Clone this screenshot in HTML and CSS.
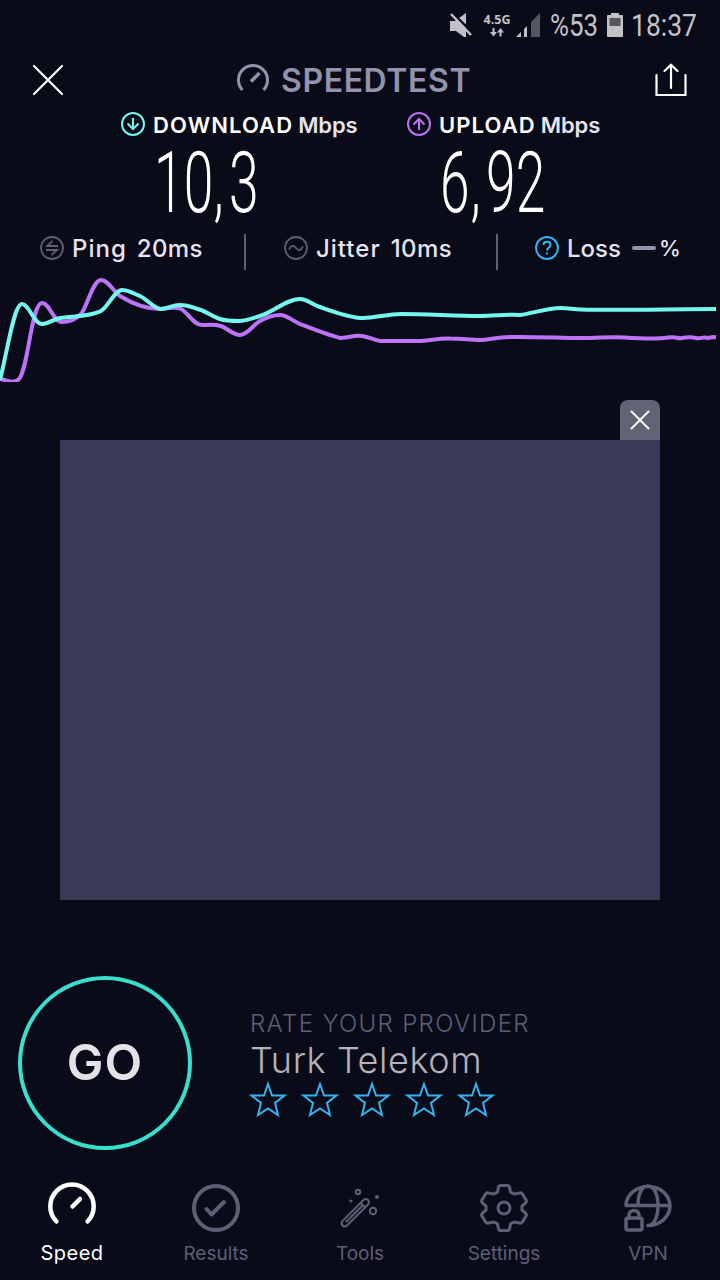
FILE: index.html
```html
<!DOCTYPE html>
<html lang="tr">
<head>
  <meta charset="UTF-8" />
  <meta name="viewport" content="width=device-width, initial-scale=1.0" />
  <title>Speedtest</title>
  <link rel="stylesheet" href="styles.css">
</head>
<body>
  <div class="status-bar">
    <svg class="mute" width="23" height="26" viewBox="0 0 23 26">
      <path d="M0 7H5L16 -1V23H14L6 17H0Z" fill="#c2c2c5" />
      <path d="M0 -3L24 20" stroke="#090b19" stroke-width="2.500" />
      <path d="M1 0L21 21" stroke="#c2c2c5" stroke-width="2.500" />
    </svg>
    <div class="network">
      <span>4.5G</span>
      <svg width="14" height="9" viewBox="0 0 14 9">
        <path d="M2.500 0H4.500V4H7L3.500 8.500L0 4H2.500ZM9.500 8.500H11.500V4.500H14L10.500 0L7 4.500H9.500Z" fill="#c2c2c5" />
      </svg>
    </div>
    <svg class="signal" width="25" height="25" viewBox="0 0 25 25">
      <path d="M0 24L5 19V24ZM8 24V16L11 13V24Z" fill="#c2c2c5" />
      <path d="M15 24V9L24 0V24Z" fill="#565661" />
    </svg>
    <svg class="percent" width="49" height="40" viewBox="0 0 49 40">
      <text x="0" y="31" textLength="48" lengthAdjust="spacingAndGlyphs">%53</text>
    </svg>
    <svg class="battery" width="16" height="24" viewBox="0 0 16 24">
      <path d="M4 0H12V2H15Q16 2 16 3V23Q16 24 15 24H1Q0 24 0 23V3Q0 2 1 2H4Z" fill="#c2c2c5" />
      <path d="M2.500 5H13.500V13H2.500Z" fill="#565661" />
    </svg>
    <svg class="clock" width="68" height="40" viewBox="0 0 68 40">
      <text x="0" y="31" textLength="66" lengthAdjust="spacingAndGlyphs">18:37</text>
    </svg>
  </div>

  <div class="top-bar">
    <svg width="32" height="32" viewBox="0 0 32 32" fill="none" stroke="#fff" stroke-width="2.200" stroke-linecap="round">
      <path d="M2 2L30 30M30 2L2 30" />
    </svg>
    <div class="brand">
      <svg width="34" height="32" viewBox="0 0 34 32" fill="none" stroke="#9393ab" stroke-width="3">
        <path d="M6.500 26A14.500 14.500 0 1 1 27.500 26" />
        <path d="M15 17.500L23.500 9" stroke-width="3.500" />
      </svg>
      <span>SPEEDTEST</span>
    </div>
    <svg width="32" height="34" viewBox="0 0 32 34" fill="none" stroke="#fff" stroke-width="2.200">
      <path d="M1.500 12V32H30.500V12M16 25V2M9.500 8L16 1.800L22.500 8" stroke-linecap="round" />
    </svg>
  </div>

  <div class="results">
    <div class="result download">
      <div class="result-label">
        <svg width="24" height="24" viewBox="0 0 24 24" fill="none" stroke="#74f7ee" stroke-width="2">
          <circle cx="12" cy="12" r="11" />
          <path d="M12 6V17M6.500 11.500L12 17L17.500 11.500" />
        </svg>
        <b>DOWNLOAD</b><span>Mbps</span>
      </div>
      <svg class="value" width="112" height="84" viewBox="0 0 112 84">
        <text transform="scale(.62 1)" x="5 53 101 126" y="72">10,3</text>
      </svg>
    </div>
    <div class="result upload">
      <div class="result-label">
        <svg width="24" height="24" viewBox="0 0 24 24" fill="none" stroke="#bf71f5" stroke-width="2">
          <circle cx="12" cy="12" r="11" />
          <path d="M12 18V7M6.500 12.500L12 7L17.500 12.500" />
        </svg>
        <b>UPLOAD</b><span>Mbps</span>
      </div>
      <svg class="value" width="112" height="84" viewBox="0 0 112 84">
        <text transform="scale(.62 1)" x="5 54 79 127" y="72">6,92</text>
      </svg>
    </div>
  </div>

  <div class="metrics">
    <div class="metric ping">
      <svg width="24" height="24" viewBox="0 0 24 24" fill="none" stroke="#5e5f75" stroke-width="1.800">
        <circle cx="12" cy="12" r="11" />
        <path d="M18 10H7L12.500 5M6 14H17L11.500 19" />
      </svg>
      <span class="name">Ping</span><span>20ms</span>
    </div>
    <div class="metric jitter">
      <svg width="24" height="24" viewBox="0 0 24 24" fill="none" stroke="#5e5f75" stroke-width="1.800">
        <circle cx="12" cy="12" r="11" />
        <path d="M5 13.500C7 9 9.500 9 12 12S17 15 19 10.500" />
      </svg>
      <span class="name">Jitter</span><span>10ms</span>
    </div>
    <div class="metric loss">
      <svg width="24" height="24" viewBox="0 0 24 24" fill="none" stroke="#36b3ee" stroke-width="2">
        <circle cx="12" cy="12" r="11" />
        <path d="M8.500 9C8.500 4.500 15.500 4.500 15.500 9C15.500 11.500 12 11.500 12 14.500M12 16.500V18.500" />
      </svg>
      <span class="name">Loss</span><i class="dash"></i><span>%</span>
    </div>
  </div>

  <svg class="chart" width="720" height="107" viewBox="0 275 720 107" fill="none" stroke-width="4">
    <path stroke="#bd73f7" d="M0 379C8 380 12 384 18 380C28 374 31 303 42 303C50 303 53 322 62 322C69 322 75 320 81 314C87 307 93 280 101 280C108 280 113 291 120 296C133 304 147 309 160 309C167 309 174 306 181 309C188 312 193 325 202 325C208 325 214 324 221 326C227 328 233 335 240 335C247 335 253 325 260 321C267 317 273 315 280 315C287 315 293 321 300 324C313 329 328 335 340 338C347 338 354 335 362 336C369 337 374 340 380 341H418C430 341 437 338 450 338.500C462 338.500 470 340 480 340C490 340 495 337 510 337C535 336.500 560 338 585 338C600 338 610 336.500 625 337.500C640 338.500 658 339 668 337.500S676 339 682 338S691 337 696 338S703 336.500 708 338L713 337L716 337.500" />
    <path stroke="#74f7ee" d="M0 380C8 348 14 304 22 304C29 304 34 324 42 324C48 324 54 319 60 318C73 316 89 317 101 311C108 307 115 290 122 290C129 290 134 294 140 296C147 299 154 309 161 309C168 309 174 304 181 305C188 305 194 308 201 310C207 312 213 317 220 319C226 321 232 321 239 321C246 321 253 318 260 316C273 312 287 299 300 299C307 299 313 305 320 307C334 312 350 318 363 318C375 318 388 314 401 314C427 314 455 316 480 316C494 316 508 314 520 315C534 313 547 308 561 308C568 308 574 309.500 581 309.500C625 310.500 670 309 716 309" />
  </svg>

  <div class="ad">
    <div class="ad-close">
      <svg width="20" height="20" viewBox="0 0 20 20" stroke="#fff" stroke-width="1.800">
        <path d="M1 1L19 19M19 1L1 19" />
      </svg>
    </div>
    <div class="ad-body"></div>
  </div>

  <div class="provider">
    <div class="go">GO</div>
    <div class="rate">
      <div class="rate-title">RATE YOUR PROVIDER</div>
      <div class="rate-name">Turk Telekom</div>
      <svg class="stars" width="244" height="36" viewBox="0 0 244 36" fill="none" stroke="#36b3ee" stroke-width="2">
        <defs>
          <path id="star" d="M18 2L22 13.500H34.500L25 21L28 33L18 26.500L8 33L11 21L1.500 13.500H14Z" />
        </defs>
        <use href="#star" />
        <use href="#star" x="52" />
        <use href="#star" x="104" />
        <use href="#star" x="156" />
        <use href="#star" x="208" />
      </svg>
    </div>
  </div>

  <div class="nav">
    <div class="nav-item active">
      <svg width="50" height="50" viewBox="0 0 50 50" fill="none" stroke="#fff" stroke-width="4.500" stroke-linecap="round">
        <path d="M9.500 39.500A21.700 21.700 0 1 1 40.500 39.500" />
        <path d="M25.500 24.500L33 17" />
      </svg>
      <span>Speed</span>
    </div>
    <div class="nav-item">
      <svg width="50" height="50" viewBox="0 0 50 50" fill="none" stroke="#5e5f75" stroke-width="4" stroke-linecap="round" stroke-linejoin="round">
        <circle cx="25" cy="26" r="22" />
        <path d="M15.500 27L20.500 32.500L33 20" />
      </svg>
      <span>Results</span>
    </div>
    <div class="nav-item">
      <svg width="50" height="50" viewBox="0 0 50 50" fill="none" stroke="#5e5f75" stroke-width="2">
        <path d="M7.500 39L28.500 18Q31 16 33 18Q35 20 33 22.500L12 43.500Q9.500 45.500 7.500 43.500Q5.500 41.500 7.500 39ZM11 40L27 24M25.500 21L30 25.500" />
        <circle cx="23" cy="10" r="2.200" />
        <circle cx="38" cy="29" r="3.200" />
        <circle cx="42" cy="15" r="2" fill="#5e5f75" stroke="none" />
        <circle cx="16" cy="19" r="1.600" fill="#5e5f75" stroke="none" />
      </svg>
      <span>Tools</span>
    </div>
    <div class="nav-item">
      <svg width="50" height="50" viewBox="0 0 50 50" fill="none" stroke="#5e5f75" stroke-width="3" stroke-linejoin="round">
        <path d="M21.500 3.500H28.500Q30 3.500 30.500 5L31.500 10L35 12L40.500 11Q42.500 10.500 43.500 12L47 18Q48 19.500 46.500 21L43 24V28L46.500 31Q48 32.500 47 34L43.500 40Q42.500 41.500 40.500 41L35 40L31.500 42L30.500 47Q30 48.500 28.500 48.500H21.500Q20 48.500 19.500 47L18.500 42L15 40L9.500 41Q7.500 41.500 6.500 40L3 34Q2 32.500 3.500 31L7 28V24L3.500 21Q2 19.500 3 18L6.500 12Q7.500 10.500 9.500 11L15 12L18.500 10L19.500 5Q20 3.500 21.500 3.500Z" />
        <circle cx="25" cy="26" r="6" />
      </svg>
      <span>Settings</span>
    </div>
    <div class="nav-item">
      <svg width="50" height="50" viewBox="0 0 50 50" fill="none" stroke="#5e5f75" stroke-width="3.500" stroke-linecap="round">
        <path d="M3 23A22 19.500 0 1 1 25 43.500M3 23.500H47M15 23C15 12 19 4 25 4S35 12 35 24C35 35 31 43 25 43.500" />
        <rect x="3" y="36" width="16" height="12" rx="2" />
        <path d="M6 36V33C6 27 16 27 16 33V36" />
      </svg>
      <span>VPN</span>
    </div>
  </div>
</body>
</html>
```
FILE: styles.css
```css
:root {
  --bg: #090b19;
  --text: #e6e4f0;
  --muted: #5e5f75;
  --brand: #9393ab;
}

* {
  box-sizing: border-box;
}

body {
  margin: 0;
  width: 720px;
  height: 1280px;
  overflow: hidden;
  background-color: var(--bg);
  color: var(--text);
  font-family: Inter, 'Liberation Sans', sans-serif;
  display: flex;
  flex-direction: column;
}

svg {
  display: block;
  flex: none;
  overflow: visible;
}

.status-bar {
  height: 50px;
  padding: 5px 20px 0 450px;
  display: flex;
  align-items: flex-start;
}

.status-bar text {
  font-family: Roboto, sans-serif;
  font-size: 31px;
  fill: #c2c2c5;
}

.mute {
  margin-top: 9px;
}

.network {
  width: 28px;
  margin: 8px 0 0 10px;
  font: bold 12.5px/14px 'Open Sans', sans-serif;
  color: #c2c2c5;
  display: flex;
  flex-direction: column;
  align-items: center;
  gap: 1px;
}

.signal {
  margin: 8px 0 0 5px;
}

.percent {
  margin-left: 9px;
}

.battery {
  margin: 8px 0 0 8px;
}

.clock {
  margin-left: 8px;
}

.top-bar {
  height: 60px;
  padding: 0 33px 0 32px;
  display: flex;
  align-items: center;
}

.brand {
  margin: 1px auto 0 172px;
  display: flex;
  align-items: center;
  gap: 11px;
  color: var(--brand);
  font-size: 32px;
  font-weight: 600;
  letter-spacing: 0.6px;
}

.results {
  height: 116px;
  padding-top: 1px;
  display: flex;
}

.download {
  width: 286px;
  margin-left: 121px;
}

.result-label {
  height: 28px;
  display: flex;
  align-items: center;
  font-size: 22px;
  font-weight: 600;
}

.result-label b {
  margin: 1px 5px 0 8px;
  color: #fff;
  font-weight: 600;
  letter-spacing: 1.1px;
}

.result-label span {
  margin-top: 1px;
  letter-spacing: -0.1px;
}

.value {
  margin: 2px 0 0 30px;
}

.value text {
  font-family: Roboto, sans-serif;
  font-size: 86px;
  font-weight: 300;
  fill: #fff;
}

.metrics {
  height: 50px;
  display: flex;
  align-items: center;
  font-size: 24px;
  font-weight: 500;
}

.metric {
  height: 36px;
  margin-top: 4px;
  display: flex;
  align-items: center;
}

.metric svg {
  margin: -7px 8px 0 0;
}

.metric span {
  margin-top: -7px;
  letter-spacing: 0.4px;
}

.metric .name {
  margin-right: 10px;
  letter-spacing: 1px;
}

.ping {
  width: 246px;
  padding-left: 40px;
  border-right: 2px solid var(--muted);
}

.jitter {
  width: 252px;
  padding-left: 38px;
  border-right: 2px solid var(--muted);
}

.loss {
  padding-left: 37px;
}

.loss .name {
  margin-right: 11px;
  letter-spacing: 0;
}

.dash {
  width: 24px;
  height: 4px;
  margin: -7px 3px 0 0;
  border-radius: 2px;
  background: var(--brand);
}

.loss span:last-child {
  font-size: 22px;
}

.chart {
  overflow: hidden;
}

.ad {
  width: 600px;
  margin: 18px 60px 0;
  display: flex;
  flex-direction: column;
  align-items: flex-end;
}

.ad-close {
  width: 40px;
  height: 40px;
  border-radius: 8px 8px 0 0;
  background: #626375;
  display: flex;
  align-items: center;
  justify-content: center;
}

.ad-body {
  width: 600px;
  height: 460px;
  background: #393a57;
}

.provider {
  margin: 76px 0 0 18px;
  display: flex;
}

.go {
  width: 174px;
  height: 174px;
  border: 4px solid #38dece;
  border-radius: 50%;
  color: #e4e2e6;
  font-size: 49px;
  font-weight: 600;
  letter-spacing: 1px;
  display: flex;
  align-items: center;
  justify-content: center;
}

.rate {
  margin: 33px 0 0 58px;
}

.rate-title {
  color: var(--muted);
  font-size: 24px;
  font-weight: 300;
  line-height: 30px;
  letter-spacing: 1.35px;
}

.rate-name {
  color: #b4b3ba;
  font-size: 36px;
  font-weight: 300;
  line-height: 43px;
  letter-spacing: 0.6px;
}

.nav {
  height: 99px;
  margin-top: 32px;
  display: flex;
}

.nav-item {
  width: 144px;
  color: var(--muted);
  font-size: 19px;
  display: flex;
  flex-direction: column;
  align-items: center;
  gap: 10px;
}

.active {
  color: #fff;
  font-size: 20px;
  letter-spacing: 0.5px;
  gap: 9px;
}
```
